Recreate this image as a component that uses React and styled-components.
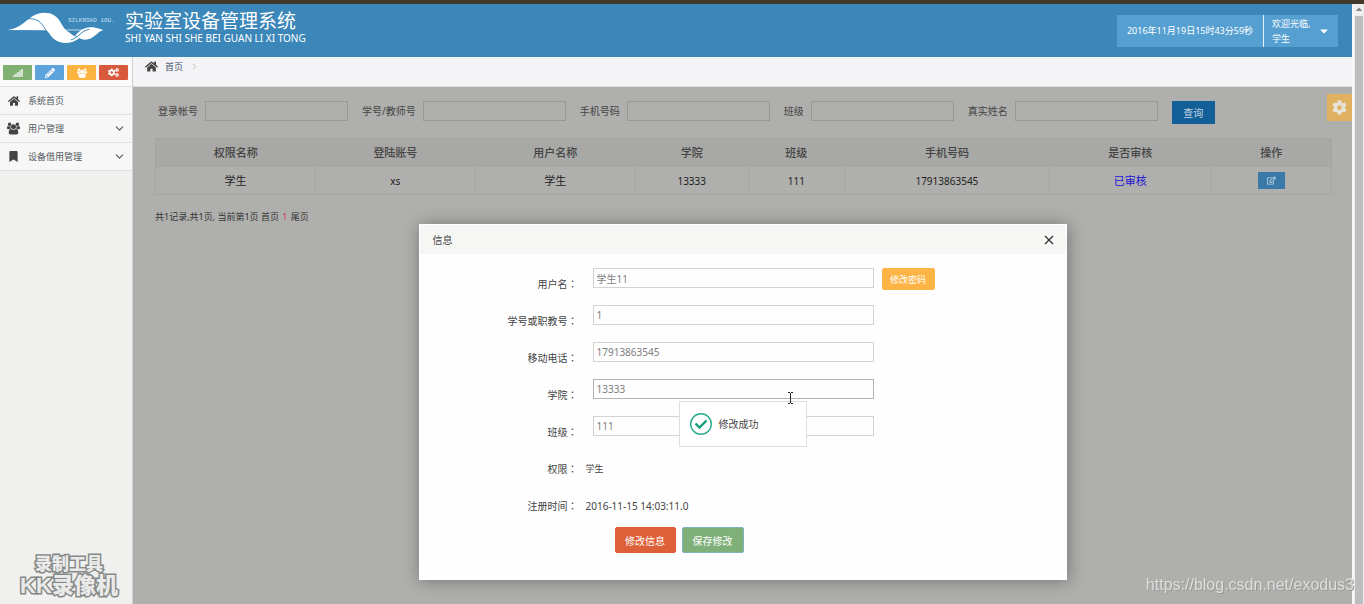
import React, { useState } from 'react'
import styled, { createGlobalStyle } from 'styled-components'
import { FaSignal, FaPencilAlt, FaCogs, FaHome, FaBookmark, FaCaretDown, FaCaretUp, FaCog, FaRegEdit } from 'react-icons/fa'
import { FiChevronDown, FiChevronRight } from 'react-icons/fi'

const GlobalStyle = createGlobalStyle`
  * {
    box-sizing: border-box;
  }
  body {
    margin: 0;
    font-family: "Noto Sans", "Noto Sans CJK SC", sans-serif;
    font-size: 10px;
    line-height: 16px;
    color: #444;
    background: #afafad;
  }
  button, input {
    font-family: inherit;
  }
  a {
    color: inherit;
    text-decoration: none;
  }
`

const Screen = styled.div`
  display: flex;
  flex-direction: column;
  min-height: 100vh;
  border-top: 4px solid #43392b;
`

const ScreenRow = styled.div`
  display: flex;
  flex: 1;
`

const Page = styled.div`
  display: flex;
  flex-direction: column;
  flex: 1;
`

const ScrollTrack = styled.div`
  display: flex;
  flex-direction: column;
  align-items: center;
  width: 12px;
  color: #8a8a8a;
  background: #efefef;
  border-left: 2px solid #f6f6f6;
`

const ScrollThumb = styled.div`
  flex: 1;
  width: 8px;
  margin-top: 2px;
  background: #bdbdbf;
`

const ScrollArrow = styled(FaCaretUp)`
  width: 8px;
  height: 10px;
`

/* header */
const Header = styled.header`
  display: flex;
  align-items: flex-start;
  height: 53px;
  padding: 8px 14px 0 7px;
  color: #fff;
  background: #3b87b9;
`

const Logo = styled.div`
  position: relative;
  width: 118px;
`

const LogoText = styled.span`
  position: absolute;
  top: 4px;
  left: 61px;
  font-family: "Liberation Mono", monospace;
  font-size: 6px;
  line-height: 10px;
  color: #c5def0;
  white-space: nowrap;
`

const Brand = styled.div`
  flex: 1;
`

const BrandTitle = styled.h1`
  margin: 0;
  font-family: "Liberation Sans", "Noto Sans CJK SC", sans-serif;
  font-size: 19px;
  font-weight: 400;
  line-height: 20px;
`

const BrandSub = styled.div`
  font-family: "Noto Sans", sans-serif;
  font-size: 10px;
  line-height: 12px;
`

const HeaderBox = styled.div`
  display: flex;
  align-items: center;
  justify-content: center;
  width: 147px;
  height: 32px;
  margin-top: 3px;
  font-size: 9px;
  background: #569fd1;
  border-right: 1px solid #e4f2fb;
`

const UserButton = styled.button`
  display: flex;
  align-items: center;
  justify-content: space-between;
  width: 74px;
  height: 32px;
  margin-top: 3px;
  padding: 0 8px;
  font-size: 9px;
  line-height: 15px;
  color: #fff;
  text-align: left;
  background: #569fd1;
  border: 0;
`

/* sidebar */
const Body = styled.div`
  display: flex;
  flex: 1;
`

const Sidebar = styled.aside`
  position: relative;
  width: 133px;
  background: #f0f0ef;
  border-right: 1px solid #d0d0d0;
`

const Shortcuts = styled.div`
  display: flex;
  gap: 3px;
  height: 29px;
  padding: 8px 3px 0;
  background: #fafafa;
`

const Shortcut = styled.button`
  display: flex;
  align-items: center;
  justify-content: center;
  width: 29px;
  height: 15px;
  padding: 0;
  font-size: 10px;
  color: #fff;
  background: ${props => props.$color};
  border: 0;
  border-radius: 1px;
`

const Menu = styled.nav`
  display: flex;
  flex-direction: column;
  border-top: 1px solid #e0e0e0;
`

const MenuLink = styled.a`
  display: flex;
  align-items: center;
  gap: 8px;
  height: 28px;
  padding: 0 6px 0 7px;
  font-size: 9px;
  color: #53585f;
  background: #f7f7f7;
  border-bottom: 1px solid #e0e0e0;
`

const MenuIcon = styled.span`
  display: flex;
  justify-content: center;
  width: 13px;
  font-size: ${props => props.$size || 12}px;
  color: #444;
`

const MenuLabel = styled.span`
  flex: 1;
`

const Recorder = styled.div`
  position: absolute;
  bottom: 5px;
  left: 0;
  width: 100%;
  padding-left: 6px;
  font-family: "Liberation Sans", "Noto Sans CJK SC", sans-serif;
  font-weight: 900;
  color: #eaeaea;
  text-align: center;
  white-space: nowrap;
  -webkit-text-stroke: 3px #858987;
  paint-order: stroke fill;
`

const RecorderLine = styled.div`
  font-size: ${props => props.$size}px;
  line-height: ${props => props.$size}px;
  padding-bottom: 2px;
`

/* content */
const Main = styled.main`
  display: flex;
  flex-direction: column;
  flex: 1;
`

const Breadcrumb = styled.nav`
  display: flex;
  gap: 7px;
  height: 30px;
  padding-left: 12px;
  font-size: 9px;
  line-height: 19px;
  color: #3f5068;
  background: #f4f4f6;
  border-bottom: 1px solid #dcdcdc;
`

const BreadcrumbIcon = styled.span`
  display: flex;
  align-items: center;
  height: 19px;
  font-size: ${props => props.$size}px;
  color: ${props => props.$color};
`

const Content = styled.section`
  position: relative;
  flex: 1;
  padding: 14px 20px 0 22px;
`

const SearchForm = styled.form`
  display: flex;
  gap: 14px;
  padding-left: 3px;
`

const SearchField = styled.label`
  display: flex;
  align-items: center;
  gap: 7px;
  height: 20px;
  white-space: nowrap;
`

const SearchInput = styled.input`
  width: 143px;
  height: 20px;
  background: transparent;
  border: 1px solid #989896;
`

const SearchButton = styled.button`
  width: 43px;
  height: 23px;
  padding: 0;
  font-size: 10px;
  color: #c3d6e4;
  background: #135f98;
  border: 0;
`

const Table = styled.table`
  width: 100%;
  margin-top: 14px;
  table-layout: fixed;
  border-collapse: collapse;
  border: 1px solid #a3a3a1;
  text-align: center;
`

const Th = styled.th`
  width: ${props => props.$width}%;
  height: 28px;
  padding: 0;
  font-size: 11px;
  font-weight: 500;
  background: #a8a8a6;
`

const Td = styled.td`
  height: 28px;
  padding: 0;
  font-size: ${props => props.$size || 11}px;
  color: ${props => props.$color || '#222'};
  border: 1px solid #a6a6a4;
`

const EditButton = styled.button`
  display: inline-flex;
  align-items: center;
  justify-content: center;
  width: 27px;
  height: 17px;
  padding: 0;
  font-size: 9px;
  color: #c3d6e4;
  vertical-align: middle;
  background: #3b7aa8;
  border: 0;
`

const Pager = styled.div`
  margin-top: 14px;
  font-size: 9px;
  color: #333;
`

const PagerCurrent = styled.a`
  margin: 0 1px;
  color: #d0384f;
`

const SettingsButton = styled.button`
  position: absolute;
  top: 7px;
  right: 0;
  display: flex;
  align-items: center;
  justify-content: center;
  width: 25px;
  height: 27px;
  padding: 0;
  font-size: 15px;
  color: #e6e2da;
  background: #e0b160;
  border: 0;
`

/* dialog */
const Dialog = styled.div`
  position: absolute;
  top: 137px;
  left: 50%;
  width: 648px;
  height: 356px;
  color: #444;
  background: #fefefe;
  border: 1px solid #fff;
  box-shadow: 1px 1px 16px rgba(0, 0, 0, 0.35);
  transform: translateX(-50%);
`

const DialogHead = styled.div`
  display: flex;
  align-items: center;
  justify-content: space-between;
  height: 29px;
  padding: 0 12px 0 13px;
  background: #f6f6f5;
`

const CloseButton = styled.button`
  display: flex;
  padding: 0;
  background: none;
  border: 0;
`

const DialogBody = styled.form`
  padding-top: 11px;
`

const FormRow = styled.div`
  display: grid;
  grid-template-columns: 158px 1fr;
  gap: 8px;
  align-items: center;
  height: 37px;
`

const FormLabel = styled.label`
  text-align: right;
`

const Colon = styled.span`
  font-family: "Noto Sans CJK TC", sans-serif;
`

const FormField = styled.div`
  display: flex;
  gap: 8px;
  align-self: start;
  padding: 3px 0 0 7px;
`

const FormValue = styled.output`
  font-size: ${props => props.$size || 10}px;
`

const FormInput = styled.input`
  width: 281px;
  height: 20px;
  padding: 0 3px;
  font-size: 10px;
  color: #7d7d7d;
  background: #fefefe;
  border: 1px solid ${props => (props.$active ? '#b4b4b4' : '#d3d3d3')};
`

const Button = styled.button`
  width: ${props => props.$width}px;
  height: ${props => props.$height}px;
  padding: 0;
  font-size: ${props => props.$size}px;
  color: #fff;
  background: ${props => props.$color};
  border: 1px solid ${props => props.$border || props.$color};
  border-radius: 2px;
`

const FormActions = styled.div`
  display: flex;
  gap: 6px;
  padding: 3px 0 0 195px;
`

const Toast = styled.div`
  position: absolute;
  top: 176px;
  left: 50%;
  display: flex;
  align-items: center;
  gap: 6px;
  width: 128px;
  height: 46px;
  padding-left: 9px;
  background: #fff;
  border: 1px solid #dedede;
  transform: translateX(-50%);
`

const Pointer = styled.svg`
  position: absolute;
  top: 167px;
  left: 367px;
`

const Credit = styled.div`
  position: fixed;
  right: 10px;
  bottom: 8px;
  font-family: "Liberation Sans", sans-serif;
  font-size: 16px;
  line-height: 22px;
  color: #dededd;
  text-shadow: 1px 1px 0 #989896;
`

const UsersIcon = () => (
  <svg width="1em" height="1em" viewBox="0 0 1920 1792" fill="currentColor" aria-hidden="true">
    <path d="M593 896q-162 5-265 128H194q-82 0-138-40.5T0 865q0-353 124-353 6 0 43.5 21t97.5 42.5T384 597q67 0 133-23-5 37-5 66 0 139 81 256zm1071 637q0 120-73 189.5t-194 69.5H523q-121 0-194-69.5T256 1533q0-53 3.5-103.5t14-109T300 1212t43-97.5 62-81 85.5-53.5T602 960q10 0 43 21.5t73 48 107 48 135 21.5 135-21.5 107-48 73-48 43-21.5q61 0 111.5 20t85.5 53.5 62 81 43 97.5 26.5 108.5 14 109 3.5 103.5zM640 256q0 106-75 181t-181 75-181-75-75-181 75-181T384 0t181 75 75 181zm704 384q0 159-112.5 271.5T960 1024 688.5 911.5 576 640t112.5-271.5T960 256t271.5 112.5T1344 640zm576 225q0 78-56 118.5t-138 40.5h-134q-103-123-265-128 81-117 81-256 0-29-5-66 66 23 133 23 59 0 119-21.5t97.5-42.5 43.5-21q124 0 124 353zm-128-609q0 106-75 181t-181 75-181-75-75-181 75-181 181-75 181 75 75 181z" />
  </svg>
)

const shortcuts = [
  { name: '统计', color: '#81b073', icon: <FaSignal /> },
  { name: '编辑', color: '#5da3dc', icon: <FaPencilAlt /> },
  { name: '用户', color: '#fdb340', icon: <UsersIcon /> },
  { name: '设置', color: '#d75a3c', icon: <FaCogs size={11} /> }
]

const menu = [
  { name: '系统首页', icon: <FaHome /> },
  { name: '用户管理', icon: <UsersIcon />, size: 13, sub: true },
  { name: '设备借用管理', icon: <FaBookmark />, size: 11, sub: true }
]

const searchFields = ['登录帐号', '学号/教师号', '手机号码', '班级', '真实姓名']

const columns = [
  { name: '权限名称', width: 13.6 },
  { name: '登陆账号', width: 13.6 },
  { name: '用户名称', width: 13.6 },
  { name: '学院', width: 9.6 },
  { name: '班级', width: 8.2 },
  { name: '手机号码', width: 17.4 },
  { name: '是否审核', width: 13.8 },
  { name: '操作', width: 10.2 }
]

const formFields = [
  { id: 'username', label: '用户名' },
  { id: 'number', label: '学号或职教号' },
  { id: 'phone', label: '移动电话' },
  { id: 'college', label: '学院' },
  { id: 'team', label: '班级' }
]

const LogoMark = () => (
  <svg width="97" height="32" viewBox="20 36 292 96" aria-hidden="true">
    <path fill="#fff" d="M20 90 C75 84 85 38 132 38 C180 38 180 78 202 94 C214 103 222 110 240 113 C226 124 212 129 195 129 C155 127 152 100 138 91 Z" />
    <path fill="#fff" d="M226 106 C238 94 250 82 272 82 C290 82 300 88 310 90 C290 96 282 119 255 119 C242 119 234 113 226 106 Z" />
    <path fill="none" stroke="#fff" strokeWidth="2" d="M196 90 H250" />
    <path fill="none" stroke="#3b87b9" strokeWidth="3" d="M84 56 C120 54 128 78 138 91" />
    <path fill="none" stroke="#3b87b9" strokeWidth="3" d="M212 120 C238 112 242 92 268 88" />
  </svg>
)

const App = () => {
  const [values, setValues] = useState({
    username: '学生11',
    number: '1',
    phone: '17913863545',
    college: '13333',
    team: '111'
  })

  const change = id => e => setValues({ ...values, [id]: e.target.value })

  return (
    <Screen>
      <GlobalStyle />
      <ScreenRow>
        <Page>
          <Header>
            <Logo>
              <LogoMark />
              <LogoText>SILKROAD 1OU.</LogoText>
            </Logo>
            <Brand>
              <BrandTitle>实验室设备管理系统</BrandTitle>
              <BrandSub>SHI YAN SHI SHE BEI GUAN LI XI TONG</BrandSub>
            </Brand>
            <HeaderBox>2016年11月19日15时43分59秒</HeaderBox>
            <UserButton type="button">
              <span>欢迎光临,<br />学生</span>
              <FaCaretDown size={12} />
            </UserButton>
          </Header>
          <Body>
            <Sidebar>
              <Shortcuts>
                {shortcuts.map(s => (
                  <Shortcut key={s.name} type="button" aria-label={s.name} $color={s.color}>{s.icon}</Shortcut>
                ))}
              </Shortcuts>
              <Menu>
                {menu.map(m => (
                  <MenuLink key={m.name} href="#">
                    <MenuIcon $size={m.size}>{m.icon}</MenuIcon>
                    <MenuLabel>{m.name}</MenuLabel>
                    {m.sub && <FiChevronDown size={13} />}
                  </MenuLink>
                ))}
              </Menu>
              <Recorder>
                <RecorderLine $size={17}>录制工具</RecorderLine>
                <RecorderLine $size={22}>KK录像机</RecorderLine>
              </Recorder>
            </Sidebar>
            <Main>
              <Breadcrumb>
                <BreadcrumbIcon $size={13} $color="#444"><FaHome /></BreadcrumbIcon>
                <a href="#">首页</a>
                <BreadcrumbIcon $size={9} $color="#a5a5a5"><FiChevronRight /></BreadcrumbIcon>
              </Breadcrumb>
              <Content>
                <SearchForm>
                  {searchFields.map(name => (
                    <SearchField key={name}>
                      {name}
                      <SearchInput type="text" />
                    </SearchField>
                  ))}
                  <SearchButton type="button">查询</SearchButton>
                </SearchForm>
                <Table>
                  <thead>
                    <tr>
                      {columns.map(c => <Th key={c.name} $width={c.width}>{c.name}</Th>)}
                    </tr>
                  </thead>
                  <tbody>
                    <tr>
                      <Td>学生</Td>
                      <Td $size={10}>xs</Td>
                      <Td>学生</Td>
                      <Td $size={10}>13333</Td>
                      <Td $size={10}>111</Td>
                      <Td $size={10}>17913863545</Td>
                      <Td $color="#1a10d8">已审核</Td>
                      <Td>
                        <EditButton type="button" aria-label="编辑"><FaRegEdit /></EditButton>
                      </Td>
                    </tr>
                  </tbody>
                </Table>
                <Pager>
                  共1记录,共1页, 当前第1页 <a href="#">首页</a> <PagerCurrent href="#">1</PagerCurrent> <a href="#">尾页</a>
                </Pager>
                <SettingsButton type="button" aria-label="设置"><FaCog /></SettingsButton>

                <Dialog role="dialog" aria-label="信息">
                  <DialogHead>
                    <span>信息</span>
                    <CloseButton type="button" aria-label="关闭">
                      <svg width="10" height="10" viewBox="0 0 10 10">
                        <path d="M1 1 L9 9 M9 1 L1 9" stroke="#333" strokeWidth="1.3" />
                      </svg>
                    </CloseButton>
                  </DialogHead>
                  <DialogBody>
                    {formFields.map(f => (
                      <FormRow key={f.id}>
                        <FormLabel htmlFor={f.id}>{f.label}<Colon>：</Colon></FormLabel>
                        <FormField>
                          <FormInput id={f.id} type="text" value={values[f.id]} onChange={change(f.id)} $active={f.id === 'college'} />
                          {f.id === 'username' && (
                            <Button type="button" $width={53} $height={22} $size={9} $color="#fdb445">修改密码</Button>
                          )}
                        </FormField>
                      </FormRow>
                    ))}
                    <FormRow>
                      <FormLabel htmlFor="role">权限<Colon>：</Colon></FormLabel>
                      <FormValue id="role" $size={9}>学生</FormValue>
                    </FormRow>
                    <FormRow>
                      <FormLabel htmlFor="created">注册时间<Colon>：</Colon></FormLabel>
                      <FormValue id="created">2016-11-15 14:03:11.0</FormValue>
                    </FormRow>
                    <FormActions>
                      <Button type="button" $width={61} $height={26} $size={10} $color="#dd6038">修改信息</Button>
                      <Button type="button" $width={62} $height={26} $size={10} $color="#7fb07a" $border="#7fb3c0">保存修改</Button>
                    </FormActions>
                  </DialogBody>
                  <Toast role="status">
                    <svg width="24" height="24" viewBox="0 0 24 24" aria-hidden="true">
                      <circle cx="12" cy="12" r="10.3" fill="none" stroke="#2aa98d" strokeWidth="1.4" />
                      <path d="M6.5 11.5 L10.5 15.5 L17.5 8.5" fill="none" stroke="#159c7e" strokeWidth="2.4" />
                    </svg>
                    修改成功
                  </Toast>
                  <Pointer width="7" height="12" viewBox="0 0 7 12" aria-hidden="true">
                    <path d="M1 0.5 H3 M4 0.5 H6 M3.5 1 V11 M1 11.5 H3 M4 11.5 H6" stroke="#222" fill="none" />
                  </Pointer>
                </Dialog>
              </Content>
            </Main>
          </Body>
        </Page>
        <ScrollTrack>
          <ScrollArrow />
          <ScrollThumb />
        </ScrollTrack>
      </ScreenRow>
      <Credit>https://blog.csdn.net/exodus3</Credit>
    </Screen>
  )
}

export default App
